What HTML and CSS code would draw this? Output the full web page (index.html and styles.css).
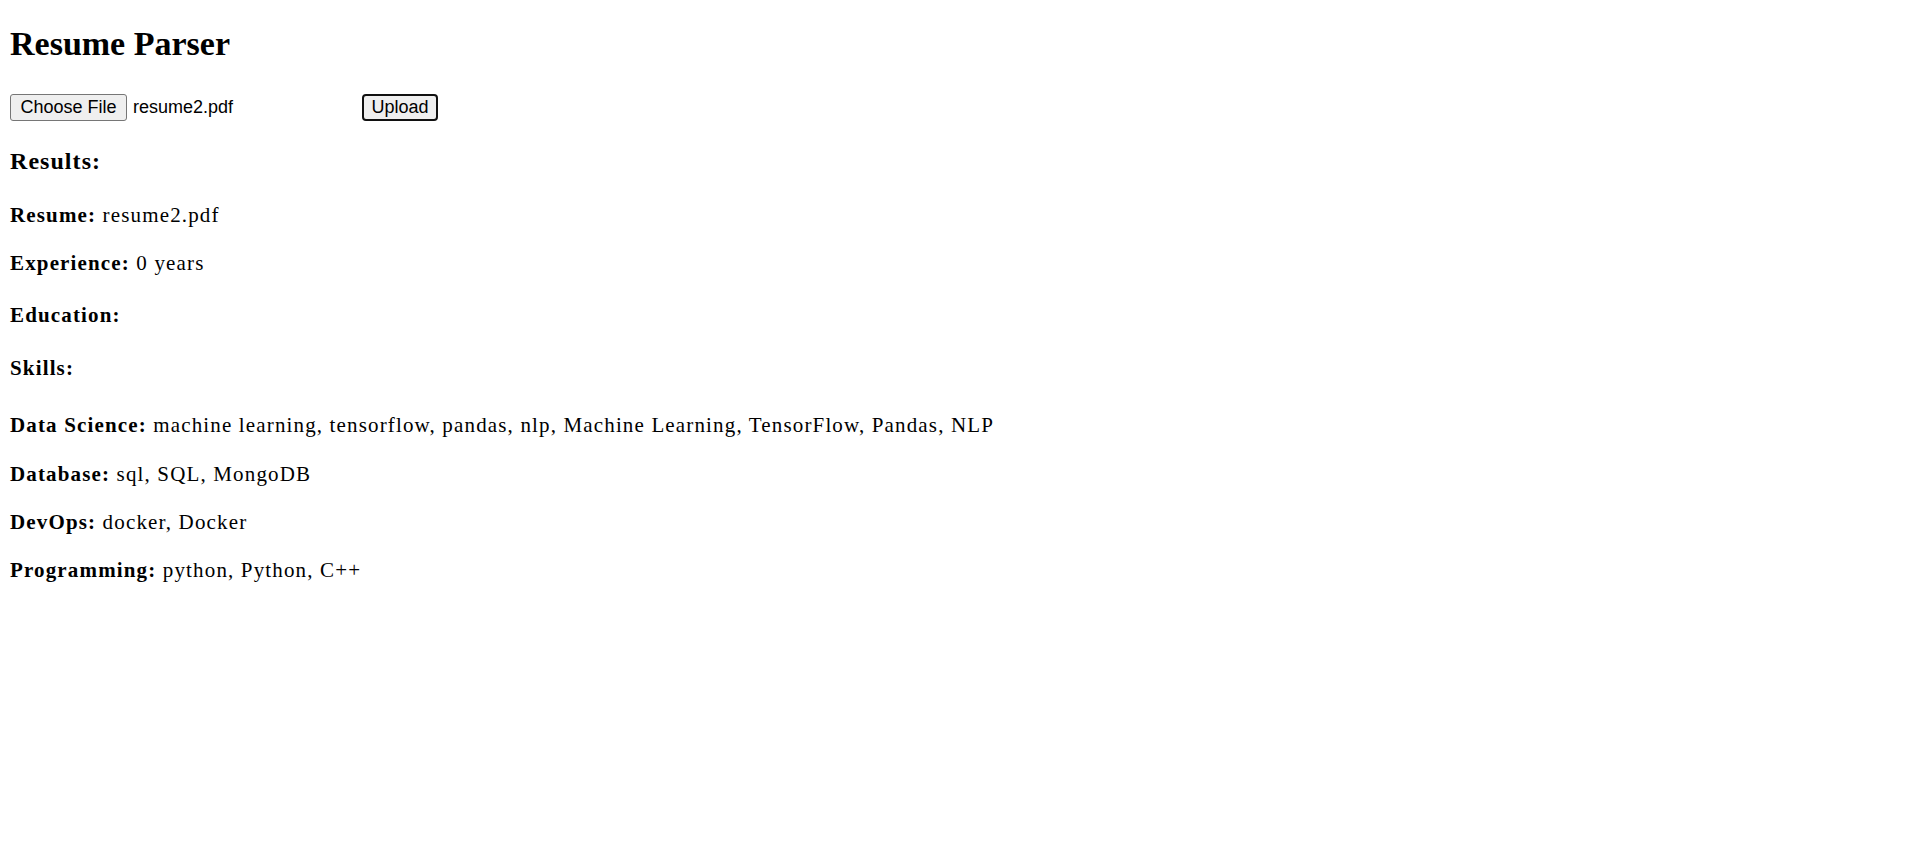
FILE: index.html
```html
<!DOCTYPE html>
<html lang="en">
<head>
<meta charset="utf-8">
<title>Resume Parser</title>
<link rel="stylesheet" href="styles.css">
</head>
<body>
<main class="page">
  <h1 class="title">Resume Parser</h1>
  <form class="upload-form">
    <span class="file-input">
      <span class="file-btn">Choose File</span>
      <span class="file-name">resume2.pdf</span>
    </span>
    <button type="button" class="upload-btn">Upload</button>
  </form>
  <h3 class="results-title">Results:</h3>
  <section class="results">
    <p class="row"><strong>Resume:</strong> resume2.pdf</p>
    <p class="row"><strong>Experience:</strong> 0 years</p>
    <p class="row row-education"><strong>Education:</strong></p>
    <p class="row row-skills"><strong>Skills:</strong></p>
    <p class="row row-first-skill"><strong>Data Science:</strong> machine learning, tensorflow, pandas, nlp, Machine Learning, TensorFlow, Pandas, NLP</p>
    <p class="row row-after-first"><strong>Database:</strong> sql, SQL, MongoDB</p>
    <p class="row"><strong>DevOps:</strong> docker, Docker</p>
    <p class="row"><strong>Programming:</strong> python, Python, C++</p>
  </section>
</main>
</body>
</html>
```
FILE: styles.css
```css
html, body {
  margin: 0;
  padding: 0;
  background: #ffffff;
  color: #000000;
}

.page {
  padding: 0 10px;
  font-family: "Liberation Serif", "Times New Roman", serif;
}

.title {
  margin: 24px 0 0;
  font-size: 34px;
  line-height: 40px;
  font-weight: 700;
}

.upload-form {
  display: flex;
  align-items: center;
  margin-top: 30px;
  height: 27px;
  font-family: "Liberation Sans", Arial, sans-serif;
  font-size: 18px;
}

.file-input {
  display: flex;
  align-items: center;
  width: 348px;
}

.file-btn {
  box-sizing: border-box;
  height: 27px;
  width: 117px;
  display: flex;
  align-items: center;
  justify-content: center;
  background: #efefef;
  border: 1px solid #767676;
  border-radius: 3px;
  color: #000;
}

.file-name {
  margin-left: 6px;
}

.upload-btn {
  box-sizing: border-box;
  margin-left: 4px;
  height: 27px;
  width: 76px;
  padding: 0;
  background: #efefef;
  border: 2px solid #101010;
  border-radius: 4px;
  font-family: "Liberation Sans", Arial, sans-serif;
  font-size: 18px;
  color: #000;
}

.results-title {
  margin: 26px 0 0;
  font-size: 24px;
  line-height: 28px;
  font-weight: 700;
  letter-spacing: 1.05px;
}

.results {
  display: flex;
  flex-direction: column;
  gap: 24px;
  margin-top: 28px;
}

.row {
  margin: 0;
  font-size: 21px;
  line-height: 24px;
  letter-spacing: 1.15px;
}

.row strong {
  font-weight: 700;
}

.row-education { margin-top: 3.5px; }
.row-skills { margin-top: 5.5px; }
.row-first-skill { margin-top: 8.5px; }
.row-after-first { margin-top: 1px; }
```
